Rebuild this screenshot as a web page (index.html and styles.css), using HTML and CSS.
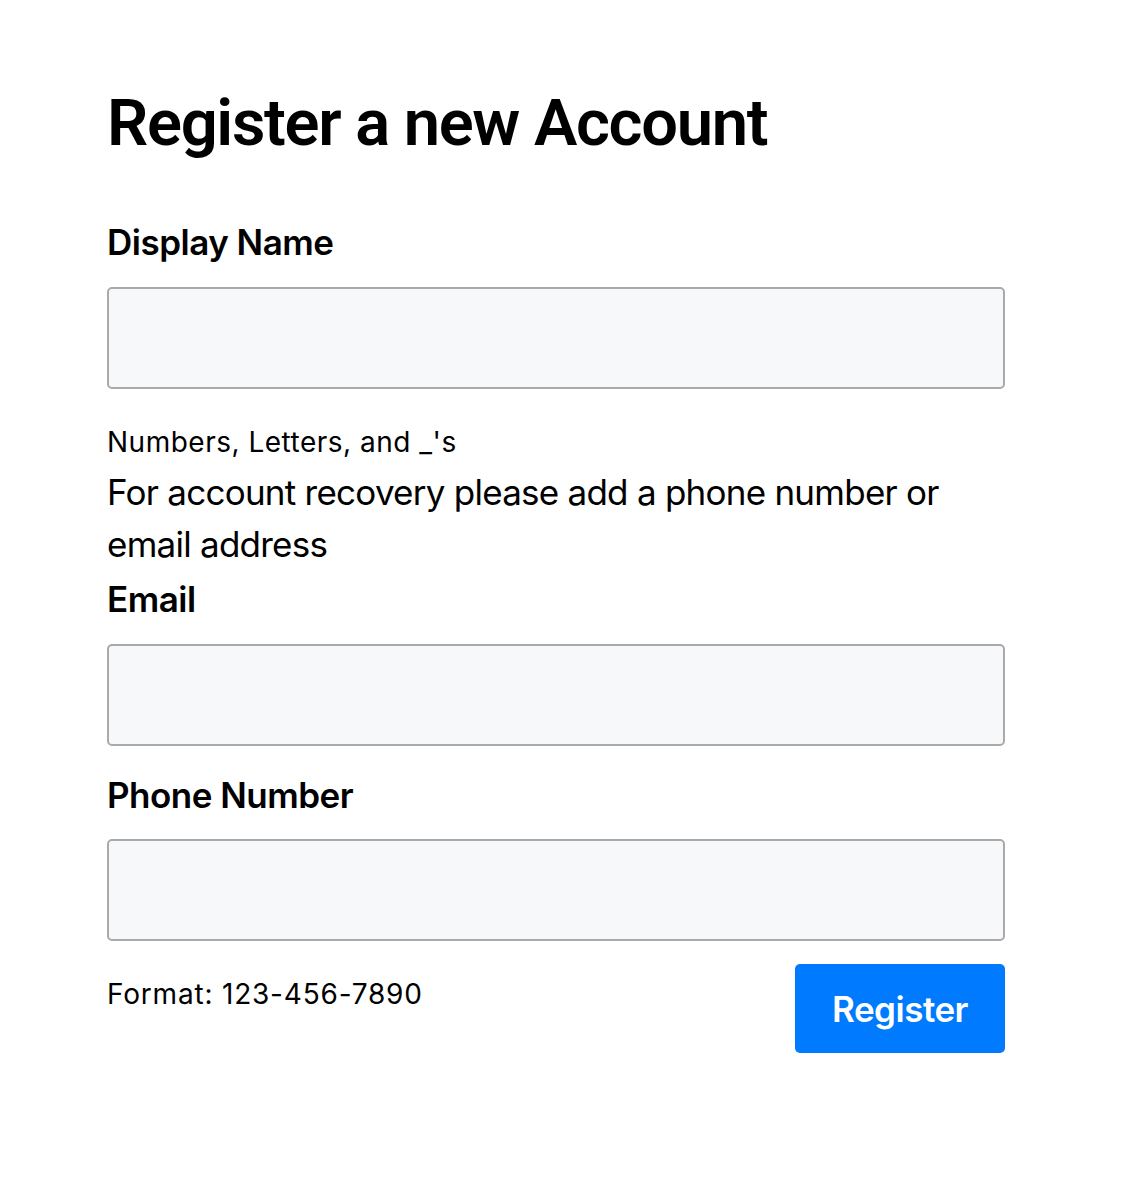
FILE: index.html
```html
<!DOCTYPE html>
<html lang="en">
<head>
<meta charset="utf-8">
<title>Register</title>
<link rel="stylesheet" href="styles.css">
</head>
<body>
<main class="page">
  <h2 class="title">Register a new Account</h2>
  <form class="form">
    <label class="label" for="name">Display Name</label>
    <input class="field" id="name" type="text">
    <small class="hint hint-name">Numbers, Letters, and _'s</small>
    <p class="note">For account recovery please add a phone number or email address</p>
    <label class="label" for="email">Email</label>
    <input class="field" id="email" type="email">
    <label class="label label-phone" for="phone">Phone Number</label>
    <input class="field" id="phone" type="tel">
    <div class="footer">
      <small class="hint hint-format">Format: 123-456-7890</small>
      <button class="btn" type="button">Register</button>
    </div>
  </form>
</main>
</body>
</html>
```

FILE: styles.css
```css
html, body {
  margin: 0;
  padding: 0;
  background: #ffffff;
}

body {
  font-family: Inter, "Noto Sans", "Liberation Sans", sans-serif;
  color: #000000;
}

.page {
  padding: 84px 0 0 107px;
  width: 898px;
}

.title {
  margin: 0 0 54px;
  font-family: Roboto, Inter, "Liberation Sans", sans-serif;
  font-size: 65px;
  line-height: 78px;
  font-weight: 600;
  letter-spacing: -1.3px;
}

.form {
  display: flex;
  flex-direction: column;
}

.label {
  display: block;
  font-size: 35px;
  line-height: 52.5px;
  font-weight: 600;
  letter-spacing: -0.5px;
}

.field {
  display: block;
  box-sizing: border-box;
  width: 898px;
  height: 102px;
  margin: 17px 0 0;
  padding: 0 24px;
  background: #f7f8fa;
  border: 2px solid #aaaaaa;
  border-radius: 5px;
  font: inherit;
  font-size: 35px;
  outline: none;
}

.hint {
  display: block;
  font-size: 28px;
  line-height: 42px;
  letter-spacing: 0.5px;
}

.hint-name {
  margin-top: 32px;
}

.hint-format {
  margin-top: 9px;
  letter-spacing: 0.8px;
}

.note {
  margin: 3px 0 2px;
  font-size: 35px;
  line-height: 52.8px;
  letter-spacing: -0.75px;
}

.label + .field {
  margin-top: 18px;
}

.label-phone {
  margin-top: 23px;
}

.footer {
  display: flex;
  justify-content: space-between;
  align-items: flex-start;
  margin-top: 23px;
}

.btn {
  width: 210px;
  height: 89px;
  padding: 0;
  background: #007bff;
  color: #ffffff;
  border: none;
  border-radius: 5px;
  font-family: inherit;
  font-size: 35px;
  font-weight: 600;
  letter-spacing: -0.5px;
}
```
